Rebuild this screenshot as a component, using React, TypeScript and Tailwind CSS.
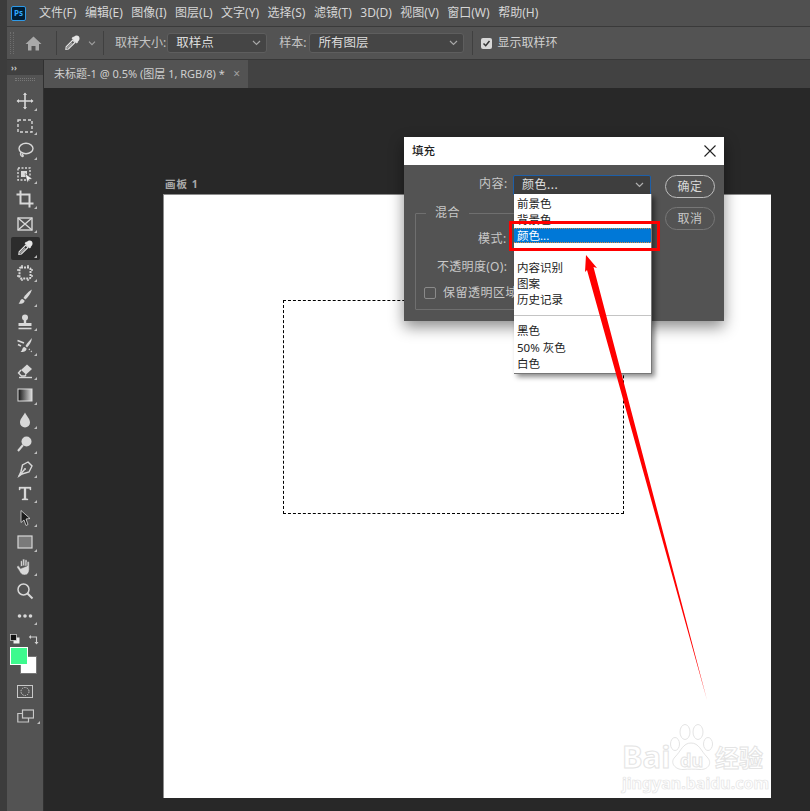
import type { ReactNode } from "react";

const ic = "#d8d8d8";

function Tool({ children, fly = true, active = false }: { children: ReactNode; fly?: boolean; active?: boolean }) {
  return (
    <div className="flex h-[24.5px] items-center justify-center">
      <div className={`relative flex h-[23px] w-[29px] items-center justify-center rounded-[2px] ${active ? "bg-[#2c2c2c]" : ""}`}>
        <svg width="18" height="18" viewBox="0 0 18 18" fill="none" stroke={ic} strokeWidth="1.4">
          {children}
        </svg>
        {fly && <span className="absolute bottom-[2px] right-[3px] h-0 w-0 border-b-[3px] border-l-[3px] border-b-[#bdbdbd] border-l-transparent" />}
      </div>
    </div>
  );
}

function DropperPaths() {
  return (
    <>
      <circle cx="13.6" cy="4.4" r="2.9" fill="#e6e6e6" stroke="none" />
      <path d="M9.4 3.4 L14.6 8.6" stroke="#e6e6e6" strokeWidth="2.2" fill="none" />
      <path d="M9.8 6.2 L12 8.4 L5.4 15 L2.9 15.3 L3.2 12.8 Z" stroke="#e6e6e6" strokeWidth="1.2" fill="none" />
      <path d="M8.6 8.6 L9.8 9.8 L5 14.4 L3.7 14.5 L3.8 13.2 Z" fill="#9a9a9a" stroke="none" />
    </>
  );
}

function Select({ value, className }: { value: string; className: string }) {
  return (
    <div className={`flex h-[20px] items-center justify-between rounded-[3px] border border-[#5e5e5e] bg-[#454545] pl-[8px] pr-[5px] text-[12.5px] text-[#dcdcdc] ${className}`}>
      <span>{value}</span>
      <svg width="9" height="6" viewBox="0 0 9 6" fill="none" stroke="#a8a8a8" strokeWidth="1.2"><path d="M1 1 L4.5 4.5 L8 1" /></svg>
    </div>
  );
}

const menus = ["文件(F)", "编辑(E)", "图像(I)", "图层(L)", "文字(Y)", "选择(S)", "滤镜(T)", "3D(D)", "视图(V)", "窗口(W)", "帮助(H)"];

function Row({ children }: { children?: ReactNode }) {
  return <div className="h-[16.1px] pl-[3px] text-[11.5px] leading-[16px] text-[#222]">{children}</div>;
}

export default function App() {
  return (
    <div
      className="relative flex h-[811px] w-[810px] flex-col overflow-hidden bg-[#3c3c3c] pl-[7px]"
      style={{ fontFamily: '"Noto Sans", "Noto Sans CJK SC", sans-serif' }}
    >
      {/* Menu bar */}
      <div className="flex h-[27px] shrink-0 items-center border-b border-[#3a3a3a] bg-[#505050] pl-[4px] text-[12px] text-[#d6d6d6]">
        <div className="mr-[13px] flex h-[15px] w-[15px] items-center justify-center rounded-[2px] border border-[#2f9ae8] bg-[#001e36] text-[8px] font-bold leading-none text-[#31a8ff]">Ps</div>
        <div className="flex gap-[8.5px]">
          {menus.map((m) => (
            <span key={m} className="whitespace-nowrap">{m}</span>
          ))}
        </div>
      </div>

      {/* Options bar */}
      <div className="flex h-[33px] shrink-0 items-center border-b border-[#383838] bg-[#535353] text-[12px] text-[#c4c4c4]">
        <div className="ml-[3px] h-[22px] w-[4px] border-x border-dotted border-[#6e6e6e]" />
        <svg className="ml-[11px]" width="17" height="15" viewBox="0 0 17 15" fill="#a9a9a9">
          <path d="M8.5 0.5 L16.5 8 L14 8 L14 14.5 L10.5 14.5 L10.5 10 L6.5 10 L6.5 14.5 L3 14.5 L3 8 L0.5 8 Z" />
        </svg>
        <div className="ml-[14px] h-[24px] w-px bg-[#404040]" />
        <svg className="ml-[6px]" width="18" height="18" viewBox="0 0 18 18"><DropperPaths /></svg>
        <svg className="ml-[7px]" width="8" height="5" viewBox="0 0 8 5" fill="none" stroke="#a0a0a0" strokeWidth="1.1"><path d="M1 0.7 L4 3.7 L7 0.7" /></svg>
        <div className="ml-[7px] h-[24px] w-px bg-[#404040]" />
        <span className="ml-[11px] whitespace-nowrap">取样大小:</span>
        <Select value="取样点" className="ml-[1px] w-[100px]" />
        <span className="ml-[12px] whitespace-nowrap">样本:</span>
        <Select value="所有图层" className="ml-[3px] w-[155px]" />
        <div className="ml-[8px] h-[24px] w-px bg-[#404040]" />
        <div className="ml-[8px] flex h-[11px] w-[11px] items-center justify-center rounded-[2px] bg-[#d8d8d8]">
          <svg width="9" height="9" viewBox="0 0 9 9" fill="none" stroke="#333" strokeWidth="1.5"><path d="M1.5 4.5 L3.7 6.7 L7.5 2" /></svg>
        </div>
        <span className="ml-[5px] whitespace-nowrap text-[#d0d0d0]">显示取样环</span>
      </div>

      <div className="flex min-h-0 flex-1 bg-[#282828]">
        {/* Toolbox */}
        <div className="flex w-[37px] shrink-0 flex-col border-r border-[#303030] bg-[#535353]">
          <div className="flex h-[15px] shrink-0 items-center bg-[#404040] pl-[4px] text-[8px] font-bold leading-none text-[#c8c8c8]">››</div>
          <div className="mx-[8px] mt-[3px] h-[3px] shrink-0 border-x border-y border-dotted border-[#777]" />
          <div className="h-[8px] shrink-0" />

          <Tool>
            <path d="M9 1.5 V16.5 M1.5 9 H16.5" strokeWidth="1.6" />
            <path d="M9 0.5 L11 3 H7 Z M9 17.5 L11 15 H7 Z M0.5 9 L3 7 V11 Z M17.5 9 L15 7 V11 Z" fill={ic} stroke="none" />
          </Tool>
          <Tool><rect x="2" y="3" width="14" height="12" strokeDasharray="3 2" /></Tool>
          <Tool>
            <ellipse cx="10" cy="7.5" rx="7" ry="5.2" />
            <path d="M5 11.5 C4 13 4.5 15 6.5 15.5 C7.8 15.5 7 13.5 5.8 13.2" />
          </Tool>
          <Tool>
            <rect x="2" y="2" width="12" height="12" strokeDasharray="2 1.5" />
            <rect x="5" y="5" width="6" height="6" fill={ic} stroke="none" />
            <path d="M9 7.5 L16.5 13 L13 13.5 L11.5 17 Z" fill="#f0f0f0" stroke="#444" strokeWidth="0.5" />
          </Tool>
          <Tool>
            <path d="M4.5 0.5 V13.5 H17.5 M0.5 4.5 H13.5 V17.5" strokeWidth="2" />
          </Tool>
          <Tool>
            <rect x="2" y="3" width="14" height="12" />
            <path d="M2 3 L16 15 M16 3 L2 15" />
          </Tool>
          <Tool active><DropperPaths /></Tool>
          <Tool>
            <rect x="3.5" y="3.5" width="11" height="11" rx="1.5" strokeWidth="2" strokeDasharray="2 1" />
            <path d="M1 6 H3 M1 12 H3 M15 6 H17 M15 12 H17 M6 1 V3 M12 1 V3 M6 15 V17 M12 15 V17" />
          </Tool>
          <Tool>
            <path d="M16 1.5 C13 3 9 7 7.5 10 L9.5 11.5 C12 9 15 5 16 1.5 Z" fill={ic} stroke="none" />
            <path d="M6.5 11 C4 11 4.5 14 2.5 15.5 C6 16.5 9 14.5 8.5 12.5 Z" fill={ic} stroke="none" />
          </Tool>
          <Tool>
            <circle cx="9" cy="4.5" r="3" fill={ic} stroke="none" />
            <path d="M7.8 7 H10.2 V10 H15.5 V13 H2.5 V10 H7.8 Z" fill={ic} stroke="none" />
            <path d="M2.5 15.5 H15.5" strokeWidth="1.6" />
          </Tool>
          <Tool>
            <path d="M16 1 C14 3 11 6 9.5 9 L11 10.5 C13 8.5 15.5 5 16 1 Z" fill={ic} stroke="none" />
            <path d="M8.5 10 C6 10 7 13 4.5 15 C8 15.5 11 13.5 10.5 11.5 Z" fill={ic} stroke="none" />
            <path d="M1.5 3.5 L8 6 M2 7.5 L5 9" strokeWidth="1.6" />
            <path d="M13 12 L14 13 M15 14 L16 15" strokeDasharray="1 1" />
          </Tool>
          <Tool>
            <path d="M11 2.5 L16 7 L10 12.5 L5 8 Z" fill={ic} stroke="none" />
            <path d="M5 8 L2.5 11 L5.5 14 H9 L10 12.5" />
            <path d="M3 15.5 H16" />
          </Tool>
          <Tool>
            <defs>
              <linearGradient id="grad" x1="0" x2="1" y1="0" y2="0">
                <stop offset="0" stopColor="#111" />
                <stop offset="1" stopColor="#ddd" />
              </linearGradient>
            </defs>
            <rect x="2" y="3" width="14" height="12" fill="url(#grad)" stroke="#ddd" strokeWidth="1" />
          </Tool>
          <Tool>
            <path d="M9 1.5 C11 5.5 14 8 14 11.5 A5 5 0 0 1 4 11.5 C4 8 7 5.5 9 1.5 Z" fill={ic} stroke="none" />
          </Tool>
          <Tool>
            <circle cx="10.5" cy="6.5" r="5" fill={ic} stroke="none" />
            <path d="M7 10 L2 16" strokeWidth="2" />
          </Tool>
          <Tool>
            <path d="M12 2 L16 6 L13 12 L6 14 L3 16 L5 11.5 L6.5 5 Z" />
            <path d="M3 16 L8.5 9.5" />
            <circle cx="9" cy="9" r="1" fill={ic} stroke="none" />
          </Tool>
          <Tool>
            <path d="M3 3 H15 V6 H14 L13.5 4.5 H10 V14.5 L12 15 V16 H6 V15 L8 14.5 V4.5 H4.5 L4 6 H3 Z" fill={ic} stroke={ic} strokeWidth="0.3" />
          </Tool>
          <Tool>
            <path d="M5 1.5 L14 9.5 L10 10 L12 15.5 L10 16.5 L8 11 L5 13.5 Z" fill="#1c1c1c" stroke="#dcdcdc" strokeWidth="0.8" />
          </Tool>
          <Tool><rect x="2" y="3" width="14" height="12" fill="#7a7a7a" stroke="#d8d8d8" strokeWidth="1.2" /></Tool>
          <Tool>
            <path d="M4.6 8.5 V3.6 C4.6 2.4 6.6 2.4 6.6 3.6 V7.5 M6.6 7.5 V2 C6.6 0.8 8.8 0.8 8.8 2 V7.5 M8.8 7.5 V2.6 C8.8 1.4 11 1.4 11 2.6 V8 M11 8 V4.4 C11 3.2 13.2 3.2 13.2 4.4 V11.5 C13.2 15 11.5 17 8.5 17 C5.5 17 4.3 15 3.3 13 L1 9.5 C0.5 8.2 2 7.2 3 8.2 L4.6 10.5 Z" fill={ic} stroke="#535353" strokeWidth="0.5" />
          </Tool>
          <Tool fly={false}>
            <circle cx="7.5" cy="7.5" r="5.5" strokeWidth="1.5" />
            <path d="M11.5 11.5 L16.5 16.5" strokeWidth="2" />
          </Tool>
          <Tool>
            <circle cx="3.5" cy="9" r="1.8" fill={ic} stroke="none" />
            <circle cx="9" cy="9" r="1.8" fill={ic} stroke="none" />
            <circle cx="14.5" cy="9" r="1.8" fill={ic} stroke="none" />
          </Tool>

          {/* Colour swatches */}
          <div className="flex h-[19px] shrink-0 items-center justify-between pl-[3px] pr-[4px] pt-[3px]">
            <svg width="10" height="10" viewBox="0 0 10 10">
              <rect x="3.5" y="3.5" width="6" height="6" fill="#eee" />
              <rect x="0.5" y="0.5" width="6" height="6" fill="#111" stroke="#ddd" strokeWidth="0.7" />
            </svg>
            <svg width="11" height="11" viewBox="0 0 11 11" fill="none" stroke="#d0d0d0" strokeWidth="1.1">
              <path d="M2 3 H8.5 V9.5" />
              <path d="M0.8 3 L3 1 V5 Z M8.5 10.5 L6.5 8 H10.5 Z" fill="#d0d0d0" stroke="none" />
            </svg>
          </div>
          <div className="relative h-[32px] shrink-0">
            <div className="absolute left-[13px] top-[9px] h-[18px] w-[17px] border border-[#777] bg-white" />
            <div className="absolute left-[3px] top-[0px] h-[18px] w-[18px] border border-white bg-[#3dfa8e]" />
          </div>
          <div className="flex h-[25px] shrink-0 items-center justify-center">
            <svg width="16" height="13" viewBox="0 0 16 13" fill="none" stroke="#c8c8c8">
              <rect x="0.5" y="0.5" width="15" height="12" />
              <circle cx="8" cy="6.5" r="4" strokeDasharray="1.5 1" />
            </svg>
          </div>
          <div className="relative flex h-[25px] shrink-0 items-center justify-center">
            <svg width="17" height="15" viewBox="0 0 17 15" fill="none" stroke="#c8c8c8" strokeWidth="1.2">
              <rect x="5.5" y="1" width="11" height="8" />
              <path d="M5.5 4.5 H0.8 V13 H11.5 V9" />
            </svg>
            <span className="absolute bottom-[5px] right-[3px] h-0 w-0 border-b-[3px] border-l-[3px] border-b-[#bdbdbd] border-l-transparent" />
          </div>
        </div>

        {/* Document */}
        <div className="flex min-w-0 flex-1 flex-col">
          <div className="flex h-[28px] shrink-0 bg-[#424242]">
            <div className="flex w-[204px] items-center bg-[#535353] pl-[10px] text-[11px] text-[#cfcfcf]">
              <span className="whitespace-nowrap">未标题-1 @ 0.5% (图层 1, RGB/8) *</span>
              <span className="ml-auto mr-[8px] text-[12px] text-[#a0a0a0]">×</span>
            </div>
          </div>
          <div className="flex-1 pl-[119px] pt-[89px]">
            <div className="mb-[3px] h-[14px] pl-[2px] text-[10.5px] font-bold leading-[14px] tracking-[1px] text-[#a8a8a8]">画板 1</div>
            <div className="relative h-[604px] w-[608px] border-l border-t border-[#8c8c8c] bg-white">
              <div className="absolute left-[119px] top-[105px] h-[214px] w-[341px] border border-dashed border-black" />
              <Watermark />
            </div>
          </div>
        </div>
      </div>

      {/* Fill dialog */}
      <div className="absolute left-[404px] top-[137px] h-[184px] w-[320px] bg-[#535353] text-[12px] text-[#c8c8c8] shadow-[0_6px_14px_rgba(0,0,0,0.45)]">
        <div className="flex h-[28px] items-center justify-between bg-white pl-[8px] pr-[8px] text-[#222]">
          <span className="text-[11.5px] font-medium">填充</span>
          <svg width="12" height="12" viewBox="0 0 12 12" stroke="#222" strokeWidth="1.1"><path d="M0.5 0.5 L11.5 11.5 M11.5 0.5 L0.5 11.5" /></svg>
        </div>
        <div className="absolute left-[75px] top-[38px] tracking-[0.5px]">内容:</div>
        <div className="absolute left-[109px] top-[38px] flex h-[20px] w-[138px] items-center justify-between rounded-t-[2px] border border-[#1d5fa8] bg-[#3e3e3e] pl-[8px] pr-[6px] tracking-[0.5px] text-[#e0e0e0]">
          <span>颜色...</span>
          <svg width="9" height="6" viewBox="0 0 9 6" fill="none" stroke="#b0b0b0" strokeWidth="1.2"><path d="M1 1 L4.5 4.5 L8 1" /></svg>
        </div>
        <div className="absolute left-[261px] top-[38px] flex h-[23px] w-[50px] items-center justify-center rounded-full border-[1.5px] border-[#bdbdbd] tracking-[0.5px] text-[#d8d8d8]">确定</div>
        <div className="absolute left-[261px] top-[70px] flex h-[23px] w-[50px] items-center justify-center rounded-full border border-[#777] tracking-[0.5px]">取消</div>

        {/* Blend group */}
        <div className="absolute left-[11px] top-[76px] h-[97px] w-[110px] rounded-[1px] border border-[#6f6f6f]">
          <span className="absolute left-[10px] top-[-9px] bg-[#535353] px-[9px] leading-[16px] tracking-[0.5px]">混合</span>
        </div>
        <div className="absolute left-[74px] top-[93px] tracking-[0.5px]">模式:</div>
        <div className="absolute left-[33px] top-[121px] tracking-[0.3px]">不透明度(O):</div>
        <div className="absolute left-[20px] top-[150px] h-[12px] w-[12px] rounded-[2px] border border-[#8a8a8a]" />
        <div className="absolute left-[39px] top-[147px] tracking-[0.5px]">保留透明区域</div>
      </div>

      {/* Open dropdown list */}
      <div className="absolute left-[514px] top-[194px] h-[180px] w-[138px] border-b border-r border-[#777] bg-white shadow-[3px_3px_5px_rgba(0,0,0,0.45)]">
        <div className="pt-[2px]">
          <Row>前景色</Row>
          <Row>背景色</Row>
          <div className="h-[15px] border-y border-dotted border-[#d98e45] bg-[#0078d7] pl-[3px] text-[11.5px] leading-[13px] text-white">颜色...</div>
          <div className="h-[17px]" />
          <Row>内容识别</Row>
          <Row>图案</Row>
          <Row>历史记录</Row>
          <div className="flex h-[15px] items-center"><div className="h-px w-full bg-[#c4c4c4]" /></div>
          <Row>黑色</Row>
          <Row>50% 灰色</Row>
          <Row>白色</Row>
        </div>
      </div>

      {/* Red annotation box */}
      <div className="absolute left-[509px] top-[221px] h-[30px] w-[151px] border-[3px] border-[#ff0000]" />

      {/* Red arrow */}
      <svg className="pointer-events-none absolute left-0 top-0" width="810" height="811" viewBox="0 0 810 811">
        <polygon points="586,255 597,268 593.5,267 707,700 587,270 585,272" fill="#ff0000" />
      </svg>
    </div>
  );
}

function Watermark() {
  return (
    <div className="absolute left-[458px] top-[529px] h-[70px] w-[150px] select-none text-white [-webkit-text-stroke:1px_#e4e4e4]">
      <svg className="absolute left-[47px] top-[0px]" width="44" height="47" viewBox="0 0 44 47" fill="#fff" stroke="#e4e4e4" strokeWidth="1">
        <ellipse cx="6" cy="20" rx="4.5" ry="6.5" />
        <ellipse cx="16" cy="8" rx="5" ry="7.5" />
        <ellipse cx="29" cy="8" rx="5" ry="7.5" />
        <ellipse cx="39" cy="20" rx="4.5" ry="6.5" />
        <path d="M22 19 C14 19 12 27 6 33 C0 39 7 46 14 45.5 C20 45 25 45 31 45.5 C39 46 44 39 38 33 C32 27 30 19 22 19 Z" />
      </svg>
      <span className="absolute left-[58px] top-[27px] text-[18px] font-bold leading-none">du</span>
      <span className="absolute left-[0px] top-[17px] text-[31px] font-bold leading-none">Bai</span>
      <span className="absolute left-[93px] top-[22px] text-[24px] font-bold leading-none">经验</span>
      <span className="absolute left-[0px] top-[51px] whitespace-nowrap text-[16px] font-bold leading-none [-webkit-text-stroke:0.7px_#e4e4e4]">jingyan.baidu.com</span>
    </div>
  );
}
